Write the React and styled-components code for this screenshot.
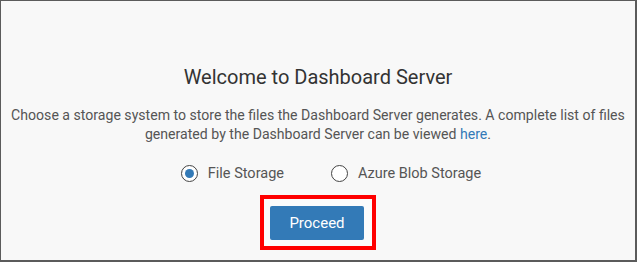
import React, { useState } from "react";
import styled, { createGlobalStyle } from "styled-components";

const Global = createGlobalStyle`
  html, body { margin: 0; padding: 0; background: #f8f8f8; }
  body { font-family: Roboto, "Liberation Sans", sans-serif; }
`;

const Frame = styled.div`
  box-sizing: border-box;
  width: 637px;
  height: 262px;
  background: #f8f8f8;
  border-style: solid;
  border-color: #5b5b5b;
  border-width: 1px 2px 2px 1px;
  display: flex;
  flex-direction: column;
  align-items: center;
  padding-top: 63px;
`;

const Title = styled.h1`
  margin: 0;
  font-size: 20px;
  font-weight: 400;
  color: #333;
  line-height: 26px;
`;

const Text = styled.p`
  margin: 16px 0 0;
  font-size: 14.1px;
  line-height: 19px;
  color: #555;
  text-align: center;
  padding: 0 6px;
`;

const Link = styled.a`
  color: #337ab7;
  text-decoration: none;
`;

const Options = styled.div`
  display: flex;
  gap: 47px;
  margin-top: 21px;
  padding-left: 26px;
`;

const Option = styled.label`
  display: flex;
  align-items: center;
  gap: 10px;
  font-size: 14.5px;
  color: #555;
  cursor: pointer;
`;

const Radio = styled.span`
  box-sizing: border-box;
  width: 17px;
  height: 17px;
  border-radius: 50%;
  border: 1.5px solid #444;
  background: #fff;
  display: flex;
  align-items: center;
  justify-content: center;
  &::after {
    content: "";
    width: 9px;
    height: 9px;
    border-radius: 50%;
    background: ${(p) => (p.$checked ? "#337ab7" : "transparent")};
  }
`;

const Highlight = styled.div`
  margin-top: 13px;
  border: 4px solid #ff0000;
  padding: 7px 8px 6px 6px;
  background: #fbfbfb;
`;

const Button = styled.button`
  width: 94px;
  height: 34px;
  border: none;
  border-radius: 2px;
  background: #337ab7;
  color: #fff;
  font-family: Roboto, "Liberation Sans", sans-serif;
  font-size: 15px;
  cursor: pointer;
  display: block;
`;

export default function App() {
  const [choice, setChoice] = useState("file");
  return (
    <>
      <Global />
      <Frame>
        <Title>Welcome to Dashboard Server</Title>
        <Text>
          Choose a storage system to store the files the Dashboard Server generates. A complete list of files
          generated by the Dashboard Server can be viewed <Link href="#">here</Link>.
        </Text>
        <Options>
          <Option onClick={() => setChoice("file")}>
            <Radio $checked={choice === "file"} />
            File Storage
          </Option>
          <Option onClick={() => setChoice("azure")}>
            <Radio $checked={choice === "azure"} />
            Azure Blob Storage
          </Option>
        </Options>
        <Highlight>
          <Button>Proceed</Button>
        </Highlight>
      </Frame>
    </>
  );
}
